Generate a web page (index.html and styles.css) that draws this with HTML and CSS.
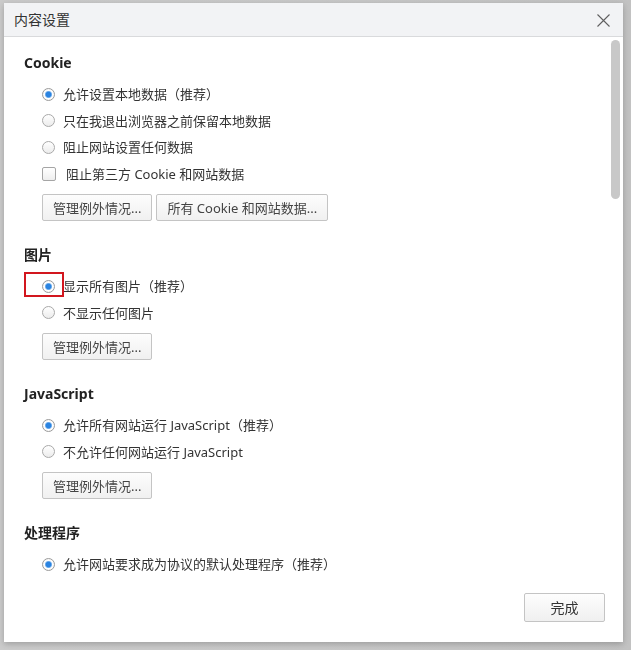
FILE: index.html
```html
<!DOCTYPE html>
<html lang="zh-CN">
<head>
<meta charset="utf-8">
<title>内容设置</title>
<link rel="stylesheet" href="styles.css">
</head>
<body>
<div class="overlay">
  <div class="dialog">
    <div class="dlg-header">
      <span class="dlg-title">内容设置</span>
      <span class="close">
        <svg width="13" height="13" viewBox="0 0 13 13"><path d="M0.5 0.5 L12.5 12.5 M12.5 0.5 L0.5 12.5" stroke="#5f5f5f" stroke-width="1.1" fill="none"/></svg>
      </span>
    </div>
    <div class="dlg-body">
      <div class="content">
        <section class="sec">
          <h3 class="sec-title">Cookie</h3>
          <div class="opt"><span class="radio checked"></span><span class="label">允许设置本地数据（推荐）</span></div>
          <div class="opt"><span class="radio"></span><span class="label">只在我退出浏览器之前保留本地数据</span></div>
          <div class="opt"><span class="radio"></span><span class="label">阻止网站设置任何数据</span></div>
          <div class="opt"><span class="checkbox"></span><span class="label">阻止第三方 Cookie 和网站数据</span></div>
          <div class="btns">
            <button class="btn">管理例外情况...</button>
            <button class="btn">所有 Cookie 和网站数据...</button>
          </div>
        </section>
        <section class="sec">
          <h3 class="sec-title">图片</h3>
          <div class="opt marked"><span class="mark"></span><span class="radio checked"></span><span class="label">显示所有图片（推荐）</span></div>
          <div class="opt"><span class="radio"></span><span class="label">不显示任何图片</span></div>
          <div class="btns">
            <button class="btn">管理例外情况...</button>
          </div>
        </section>
        <section class="sec">
          <h3 class="sec-title">JavaScript</h3>
          <div class="opt"><span class="radio checked"></span><span class="label">允许所有网站运行 JavaScript（推荐）</span></div>
          <div class="opt"><span class="radio"></span><span class="label">不允许任何网站运行 JavaScript</span></div>
          <div class="btns">
            <button class="btn">管理例外情况...</button>
          </div>
        </section>
        <section class="sec">
          <h3 class="sec-title">处理程序</h3>
          <div class="opt"><span class="radio checked"></span><span class="label">允许网站要求成为协议的默认处理程序（推荐）</span></div>
        </section>
      </div>
      <div class="thumb"></div>
    </div>
    <div class="dlg-footer">
      <button class="btn done">完成</button>
    </div>
  </div>
</div>
</body>
</html>
```
FILE: styles.css
```css
html, body {
  margin: 0;
  padding: 0;
}
body {
  width: 631px;
  height: 650px;
  overflow: hidden;
  background: linear-gradient(90deg, #cbcbcb 0, #c9c9c9 50%, #c2c2c2 100%);
  font-family: "Noto Sans", "Noto Sans CJK SC", sans-serif;
  color: #333;
}
.overlay {
  position: fixed;
  left: 0;
  top: 0;
  right: 0;
  bottom: 0;
  padding: 3px 0 0 4px;
}
.dialog {
  width: 619px;
  height: 639px;
  background: #fff;
  display: flex;
  flex-direction: column;
  box-shadow: 0 2px 6px rgba(0, 0, 0, 0.22);
}
.dlg-header {
  flex: 0 0 33px;
  background: #f2f3f5;
  border-bottom: 1px solid #d9dadc;
  display: flex;
  align-items: center;
  justify-content: space-between;
  padding: 0 13px 0 10px;
}
.dlg-title {
  font-size: 14px;
  line-height: 20px;
  color: #333;
}
.close {
  display: flex;
  width: 13px;
  height: 13px;
  margin-top: 1px;
}
.dlg-body {
  flex: 0 0 538px;
  position: relative;
  overflow: hidden;
}
.content {
  padding: 16px 20px 0 20px;
}
.sec {
  margin-bottom: 24px;
}
.sec-title {
  margin: 0 0 8px 0;
  font-size: 14px;
  line-height: 20px;
  font-weight: 700;
  color: #222;
}
.opt {
  height: 26.5px;
  display: flex;
  align-items: center;
  padding-left: 18px;
  font-size: 13px;
  color: #333;
}
.opt.marked {
  position: relative;
}
.mark {
  position: absolute;
  left: 0;
  top: -1px;
  width: 40px;
  height: 25px;
  box-sizing: border-box;
  border: 2px solid #d2161e;
}
.label {
  line-height: 18px;
  white-space: nowrap;
}
.radio {
  flex: 0 0 auto;
  width: 13px;
  height: 13px;
  box-sizing: border-box;
  border: 1px solid #a8a8a8;
  border-radius: 50%;
  background: linear-gradient(#ffffff, #ececec);
  margin-right: 8px;
}
.radio.checked {
  border-color: #9a9a9a;
  background: radial-gradient(circle at 50% 50%, #2a83e0 0, #2a83e0 2.4px, #7fb6ee 3.2px, #ffffff 4px, #f4f4f4 6px);
}
.checkbox {
  flex: 0 0 auto;
  width: 14px;
  height: 14px;
  box-sizing: border-box;
  border: 1px solid #a5a5a5;
  border-radius: 2px;
  background: linear-gradient(#ffffff, #eeeeee);
  margin-right: 10px;
}
.btns {
  display: flex;
  gap: 4px;
  margin-top: 7px;
  padding-left: 18px;
}
.btn {
  height: 27px;
  padding: 0 10px;
  border: 1px solid #c4c4c4;
  border-radius: 2px;
  background: linear-gradient(#fdfdfd, #f0f0f0);
  font-family: "Noto Sans", "Noto Sans CJK SC", sans-serif;
  font-size: 13px;
  color: #444;
  line-height: 18px;
  white-space: nowrap;
}
.thumb {
  position: absolute;
  top: 3px;
  right: 3px;
  width: 9px;
  height: 159px;
  border-radius: 5px;
  background: #c8c8c8;
}
.dlg-footer {
  flex: 1 1 auto;
  display: flex;
  justify-content: flex-end;
  align-items: flex-start;
  padding: 18px 18px 0 0;
}
.btn.done {
  width: 81px;
  height: 29px;
  font-size: 14px;
  color: #333;
  padding: 0;
}
```
